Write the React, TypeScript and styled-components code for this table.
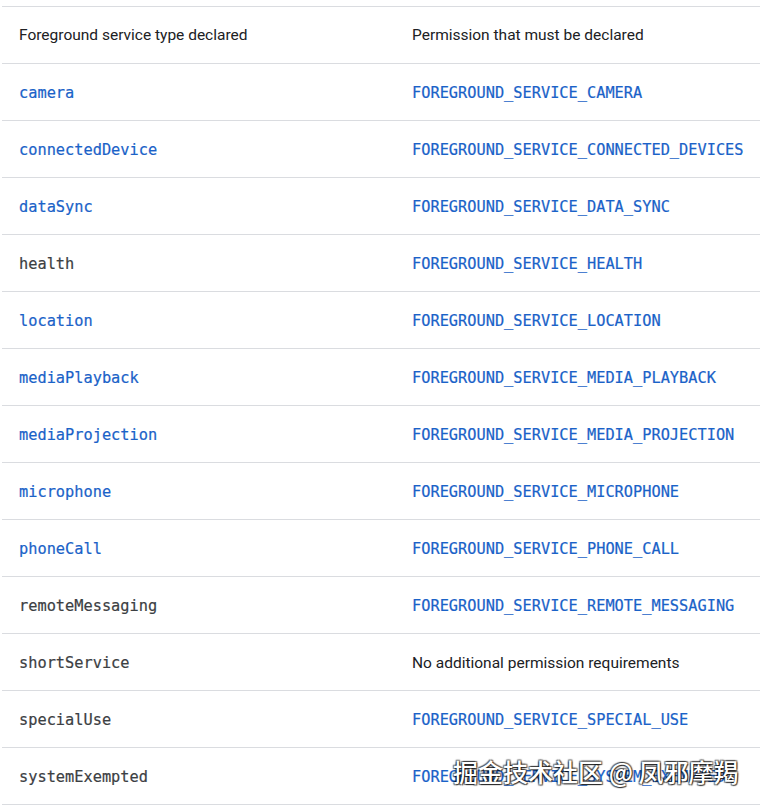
import styled, { createGlobalStyle } from "styled-components";

const rows: { type: string; permission: string; typeLink: boolean; permLink: boolean }[] = [
  { type: "camera", permission: "FOREGROUND_SERVICE_CAMERA", typeLink: true, permLink: true },
  { type: "connectedDevice", permission: "FOREGROUND_SERVICE_CONNECTED_DEVICES", typeLink: true, permLink: true },
  { type: "dataSync", permission: "FOREGROUND_SERVICE_DATA_SYNC", typeLink: true, permLink: true },
  { type: "health", permission: "FOREGROUND_SERVICE_HEALTH", typeLink: false, permLink: true },
  { type: "location", permission: "FOREGROUND_SERVICE_LOCATION", typeLink: true, permLink: true },
  { type: "mediaPlayback", permission: "FOREGROUND_SERVICE_MEDIA_PLAYBACK", typeLink: true, permLink: true },
  { type: "mediaProjection", permission: "FOREGROUND_SERVICE_MEDIA_PROJECTION", typeLink: true, permLink: true },
  { type: "microphone", permission: "FOREGROUND_SERVICE_MICROPHONE", typeLink: true, permLink: true },
  { type: "phoneCall", permission: "FOREGROUND_SERVICE_PHONE_CALL", typeLink: true, permLink: true },
  { type: "remoteMessaging", permission: "FOREGROUND_SERVICE_REMOTE_MESSAGING", typeLink: false, permLink: true },
  { type: "shortService", permission: "", typeLink: false, permLink: false },
  { type: "specialUse", permission: "FOREGROUND_SERVICE_SPECIAL_USE", typeLink: false, permLink: true },
  { type: "systemExempted", permission: "FOREGROUND_SERVICE_SYSTEM_EXEMPTED", typeLink: false, permLink: true },
];

export default function App() {
  return (
    <Page>
      <GlobalStyle />
      <Table>
        <colgroup>
          <col style={{ width: 393 }} />
          <col />
        </colgroup>
        <thead>
          <tr>
            <HeadCell>Foreground service type declared</HeadCell>
            <HeadCell>Permission that must be declared</HeadCell>
          </tr>
        </thead>
        <tbody>
          {rows.map((row) => (
            <tr key={row.type}>
              <Cell>
                <Code $link={row.typeLink}>{row.type}</Code>
              </Cell>
              <Cell>
                {row.permission ? (
                  <Code $link={row.permLink}>{row.permission}</Code>
                ) : (
                  <Plain>No additional permission requirements</Plain>
                )}
              </Cell>
            </tr>
          ))}
        </tbody>
      </Table>
      <Watermark>掘金技术社区 @ 凤邪摩羯</Watermark>
    </Page>
  );
}

const GlobalStyle = createGlobalStyle`
  html, body {
    margin: 0;
    padding: 0;
    background: #ffffff;
  }
`;

const Page = styled.div`
  position: relative;
  width: 761px;
  height: 806px;
  overflow: hidden;

  padding: 6px 1px 0 2px;
  box-sizing: border-box;

  font-family: Roboto, "Noto Sans", sans-serif;
`;

const Table = styled.table`
  width: 758px;
  table-layout: fixed;
  border-collapse: collapse;
  border-top: 1px solid #dadce0;
`;

const HeadCell = styled.th`
  height: 57px;
  padding: 0 17px;
  box-sizing: border-box;

  text-align: left;
  font-weight: 400;
  font-size: 15.5px;
  color: #202124;

  border-bottom: 1px solid #dadce0;
`;

const Cell = styled.td`
  height: 57px;
  padding: 0 17px;
  box-sizing: border-box;
  white-space: nowrap;

  border-bottom: 1px solid #dadce0;
`;

const Code = styled.code<{ $link: boolean }>`
  font-family: "DejaVu Sans Mono", "Liberation Mono", monospace;
  font-size: 15.3px;
  -webkit-text-stroke: 0.2px currentColor;
  color: ${({ $link }) => ($link ? "#1a62c8" : "#3c4043")};
`;

const Plain = styled.span`
  font-size: 15.5px;
  color: #202124;
`;

const Watermark = styled.div`
  position: absolute;
  left: 453px;
  top: 753px;

  font-family: "Noto Sans CJK SC", sans-serif;
  font-size: 25px;
  font-weight: 500;
  letter-spacing: 0;
  color: #ffffff;
  text-shadow:
    1px 1px 1px rgba(0, 0, 0, 0.7),
    -1px -1px 1px rgba(0, 0, 0, 0.55),
    1px -1px 1px rgba(0, 0, 0, 0.55),
    -1px 1px 1px rgba(0, 0, 0, 0.55);
`;
